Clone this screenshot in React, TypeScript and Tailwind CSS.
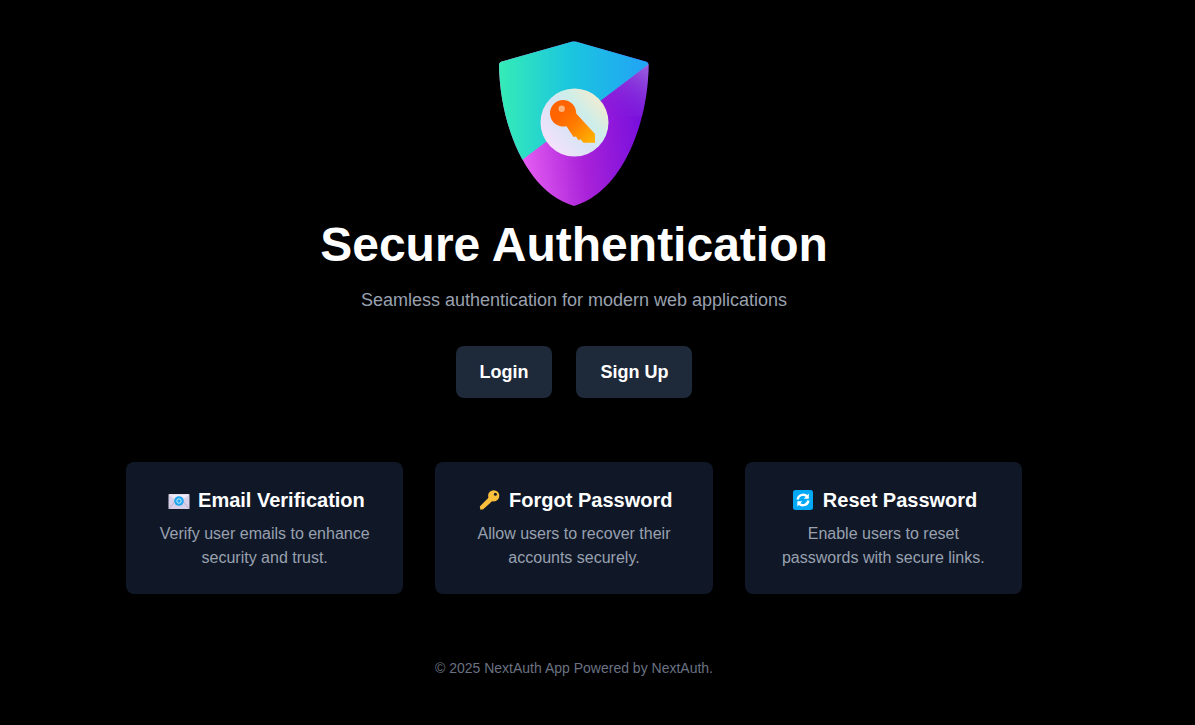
const features = [
  {
    title: 'Email Verification',
    icon: <EmailIcon />,
    lines: ['Verify user emails to enhance', 'security and trust.'],
  },
  {
    title: 'Forgot Password',
    icon: <KeyIcon />,
    lines: ['Allow users to recover their', 'accounts securely.'],
  },
  {
    title: 'Reset Password',
    icon: <ResetIcon />,
    lines: ['Enable users to reset', 'passwords with secure links.'],
  },
];

function EmailIcon() {
  return (
    <svg viewBox="0 0 26 20" className="w-[26px] h-5">
      <rect x="3.5" y="4" width="21" height="15" rx="1" fill="#d8cfe8" />
      <path d="M3.5 4.5 L14 12.5 L24.5 4.5 Z" fill="#efeaf6" />
      <path d="M3.5 19 L10.5 11 M24.5 19 L17.5 11" stroke="#b3a8ca" strokeWidth="0.8" />
      <circle cx="14" cy="11" r="4.8" fill="#1ea7ee" />
      <circle cx="14" cy="11" r="2.2" fill="none" stroke="#c9ecfb" strokeWidth="1" />
    </svg>
  );
}

function KeyIcon() {
  return (
    <svg viewBox="0 0 26 20" className="w-[26px] h-5">
      <g fill="#fbbf3c" transform="translate(-0.8 0)">
        <circle cx="18.5" cy="5.8" r="5.6" />
        <path d="M14.5 6.5 L18 10.2 L8 19.2 L5.2 19.8 L4.6 16.6 Z" />
      </g>
      <circle cx="19.4" cy="4.2" r="1.5" fill="#111827" />
    </svg>
  );
}

function ResetIcon() {
  return (
    <svg viewBox="0 0 26 20" className="w-[26px] h-5">
      <rect x="4" y="0" width="20" height="20" rx="2.5" fill="#03a9f4" />
      <g fill="none" stroke="#fff" strokeWidth="2.3">
        <path d="M8.7 9.5 A5.4 5.4 0 0 1 18.1 6.6" />
        <path d="M19.4 10.5 A5.4 5.4 0 0 1 10 13.4" />
      </g>
      <path d="M19.8 3.6 V8.8 H14.8 Z" fill="#fff" />
      <path d="M8.3 16.4 V11.2 H13.3 Z" fill="#fff" />
    </svg>
  );
}

function ShieldLogo() {
  const shield =
    'M569 42.5 Q574 40.5 579 42.5 L646.5 61.8 Q648.6 62.6 648.6 65 C648 125 622 192 574 206 C526 192 500 125 499 65 Q499 62.6 501 61.8 Z';
  return (
    <svg viewBox="494 38 160 170" className="w-40 h-[170px] mx-auto block">
      <defs>
        <clipPath id="shield-clip">
          <path d={shield} />
        </clipPath>
        <linearGradient id="top-grad" gradientUnits="userSpaceOnUse" x1="499" y1="90" x2="640" y2="90">
          <stop offset="0" stopColor="#35ecb6" />
          <stop offset="0.5" stopColor="#1bc6de" />
          <stop offset="1" stopColor="#21a6f3" />
        </linearGradient>
        <linearGradient id="bottom-grad" gradientUnits="userSpaceOnUse" x1="522" y1="150" x2="640" y2="135">
          <stop offset="0" stopColor="#e45df2" />
          <stop offset="0.5" stopColor="#a922d8" />
          <stop offset="1" stopColor="#7a10dc" />
        </linearGradient>
        <linearGradient id="corner-grad" gradientUnits="userSpaceOnUse" x1="650" y1="66" x2="610" y2="120">
          <stop offset="0" stopColor="#a78bdc" stopOpacity="0.7" />
          <stop offset="1" stopColor="#7a10dc" stopOpacity="0" />
        </linearGradient>
        <linearGradient id="disc-grad" gradientUnits="userSpaceOnUse" x1="548" y1="145" x2="600" y2="100">
          <stop offset="0" stopColor="#f4e2fb" />
          <stop offset="0.45" stopColor="#d6e4f5" />
          <stop offset="0.7" stopColor="#cdeee9" />
          <stop offset="1" stopColor="#f0ecd2" />
        </linearGradient>
        <linearGradient id="key-grad" gradientUnits="userSpaceOnUse" x1="562" y1="112" x2="592" y2="140">
          <stop offset="0" stopColor="#ff6400" />
          <stop offset="0.4" stopColor="#ff7a00" />
          <stop offset="1" stopColor="#ffb000" />
        </linearGradient>
      </defs>
      <g clipPath="url(#shield-clip)">
        <rect x="494" y="38" width="160" height="170" fill="url(#bottom-grad)" />
        <path d="M494 184 L522 160 L660 56 V38 H494 Z" fill="url(#top-grad)" />
        <path d="M650 63 L580 116 H650 Z" fill="url(#corner-grad)" />
      </g>
      <circle cx="574.5" cy="122.5" r="34" fill="url(#disc-grad)" />
      <path
        d="M563 100 A13.2 13.2 0 0 1 576.2 113.5 L595 134 V142.7 H583.5 L580.5 139.2 L578.5 140.2 L576 136.6 L573.5 137 L566.5 126.2 A13.2 13.2 0 0 1 550 113.2 A13.2 13.2 0 0 1 563 100 Z"
        fill="url(#key-grad)"
      />
      <circle cx="561.7" cy="108.7" r="3.2" fill="#ffb27a" />
    </svg>
  );
}

export default function App() {
  return (
    <div className="min-h-screen bg-black text-white font-['Liberation_Sans',Arial,sans-serif] pt-[38px] pr-[47px]">
      <div className="flex flex-col items-center text-center">
        <ShieldLogo />
        <h1 className="mt-[13px] text-5xl font-bold">Secure Authentication</h1>
        <p className="mt-[17px] text-lg text-gray-400">
          Seamless authentication for modern web applications
        </p>

        <div className="mt-8 flex gap-6">
          <button className="bg-gray-800 rounded-lg px-6 py-3 text-lg font-semibold">Login</button>
          <button className="bg-gray-800 rounded-lg px-6 py-3 text-lg font-semibold">Sign Up</button>
        </div>

        <div className="mt-16 w-[896px] grid grid-cols-3 gap-8">
          {features.map((f) => (
            <div key={f.title} className="bg-gray-900 rounded-lg p-6">
              <h3 className="flex items-center justify-center gap-[7.5px] text-xl font-semibold">
                {f.icon}
                {f.title}
              </h3>
              <p className="mt-2 text-base text-gray-400">
                {f.lines.map((line) => (
                  <span key={line} className="block">
                    {line}
                  </span>
                ))}
              </p>
            </div>
          ))}
        </div>

        <footer className="mt-16 text-sm text-gray-500">© 2025 NextAuth App Powered by NextAuth.</footer>
      </div>
    </div>
  );
}
